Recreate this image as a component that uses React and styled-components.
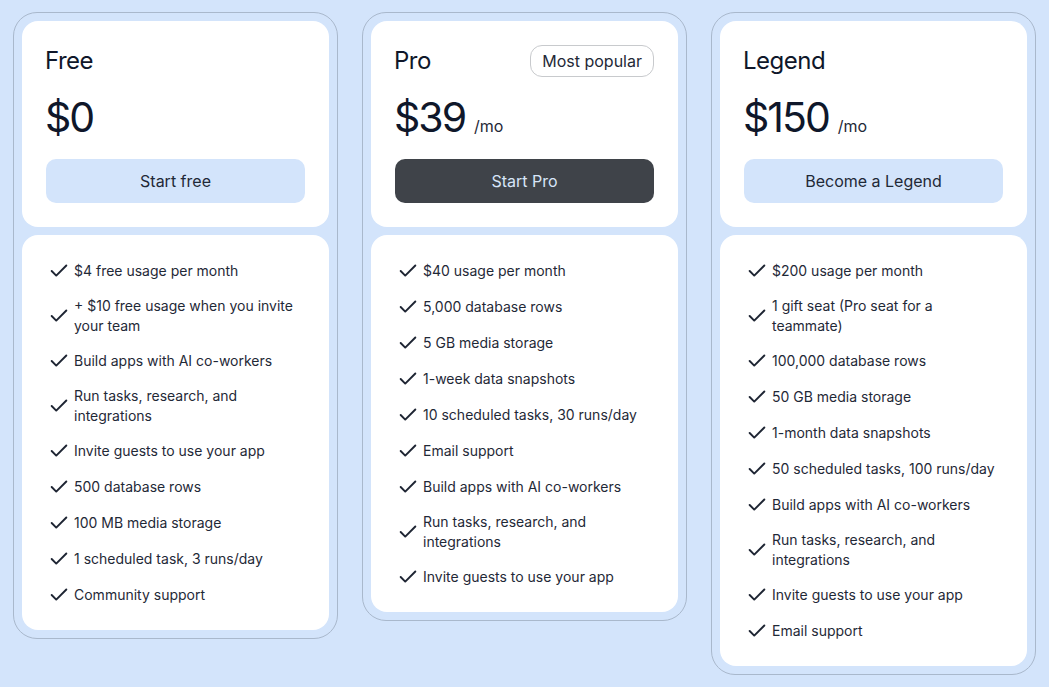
import React from "react";
import styled, { createGlobalStyle } from "styled-components";

const Global = createGlobalStyle`
  html, body { margin: 0; padding: 0; background: #d3e4fb; }
  body { font-family: Inter, "Noto Sans", sans-serif; -webkit-font-smoothing: antialiased; }
  * { box-sizing: border-box; }
`;

const Page = styled.div`
  display: flex;
  align-items: flex-start;
  gap: 24px;
  padding: 12px 13px;
  min-height: 687px;
  background: #d3e4fb;
`;

const Card = styled.div`
  width: 325px;
  flex: none;
  border: 1px solid #a9b8cc;
  border-radius: 24px;
  padding: 8px;
  display: flex;
  flex-direction: column;
  gap: 8px;
`;

const Panel = styled.div`
  background: #ffffff;
  border-radius: 16px;
`;

const Head = styled(Panel)`
  padding: 24px;
`;

const TitleRow = styled.div`
  display: flex;
  align-items: center;
  justify-content: space-between;
  height: 32px;
`;

const Title = styled.h2`
  margin: 0 0 0 -1px;
  font-size: 24px;
  line-height: 32px;
  font-weight: 400;
  letter-spacing: -0.5px;
  color: #0f172a;
`;

const Badge = styled.span`
  border: 1px solid #c8cacd;
  border-radius: 12px;
  padding: 3px 11px;
  font-size: 16px;
  line-height: 24px;
  color: #1f2937;
`;

const PriceRow = styled.div`
  display: flex;
  align-items: baseline;
  gap: 9px;
  margin-top: 16px;
  height: 48px;
`;

const Price = styled.span`
  margin-left: -1px;
  font-size: 41px;
  line-height: 48px;
  font-weight: 400;
  letter-spacing: -2px;
  color: #0f172a;
`;

const Per = styled.span`
  font-size: 16px;
  color: #1f2937;
`;

const Button = styled.button`
  display: block;
  width: 100%;
  height: 44px;
  margin-top: 18px;
  border: none;
  border-radius: 10px;
  font-family: inherit;
  font-size: 16px;
  cursor: pointer;
  background: ${(p) => (p.$dark ? "#3f4349" : "#d3e4fb")};
  color: ${(p) => (p.$dark ? "#d7e5f8" : "#1f2937")};
`;

const List = styled(Panel)`
  list-style: none;
  margin: 0;
  padding: 25px 26px 24px 26px;
  display: flex;
  flex-direction: column;
  gap: 14px;
`;

const Item = styled.li`
  display: flex;
  align-items: center;
  gap: 4px;
  font-size: 14px;
  line-height: 20px;
  color: #1f2937;
`;

const Icon = styled.svg`
  flex: none;
  width: 22px;
  height: 22px;
`;

const Text = styled.span`
  width: 229px;
`;

const Check = () => (
  <Icon viewBox="0 0 24 24" fill="none" stroke="#1e2533" strokeWidth="2.1" strokeLinecap="round" strokeLinejoin="round">
    <path d="M20 6 9 17l-5-5" />
  </Icon>
);

const plans = [
  {
    name: "Free",
    price: "$0",
    cta: "Start free",
    features: [
      "$4 free usage per month",
      "+ $10 free usage when you invite your team",
      "Build apps with AI co-workers",
      "Run tasks, research, and integrations",
      "Invite guests to use your app",
      "500 database rows",
      "100 MB media storage",
      "1 scheduled task, 3 runs/day",
      "Community support",
    ],
  },
  {
    name: "Pro",
    price: "$39",
    per: "/mo",
    badge: "Most popular",
    cta: "Start Pro",
    dark: true,
    features: [
      "$40 usage per month",
      "5,000 database rows",
      "5 GB media storage",
      "1-week data snapshots",
      "10 scheduled tasks, 30 runs/day",
      "Email support",
      "Build apps with AI co-workers",
      "Run tasks, research, and integrations",
      "Invite guests to use your app",
    ],
  },
  {
    name: "Legend",
    price: "$150",
    per: "/mo",
    cta: "Become a Legend",
    features: [
      "$200 usage per month",
      "1 gift seat (Pro seat for a teammate)",
      "100,000 database rows",
      "50 GB media storage",
      "1-month data snapshots",
      "50 scheduled tasks, 100 runs/day",
      "Build apps with AI co-workers",
      "Run tasks, research, and integrations",
      "Invite guests to use your app",
      "Email support",
    ],
  },
];

export default function App() {
  return (
    <>
      <Global />
      <Page>
        {plans.map((p) => (
          <Card key={p.name}>
            <Head>
              <TitleRow>
                <Title>{p.name}</Title>
                {p.badge && <Badge>{p.badge}</Badge>}
              </TitleRow>
              <PriceRow>
                <Price>{p.price}</Price>
                {p.per && <Per>{p.per}</Per>}
              </PriceRow>
              <Button $dark={p.dark}>{p.cta}</Button>
            </Head>
            <List as="ul">
              {p.features.map((f) => (
                <Item key={f}>
                  <Check />
                  <Text>{f}</Text>
                </Item>
              ))}
            </List>
          </Card>
        ))}
      </Page>
    </>
  );
}
